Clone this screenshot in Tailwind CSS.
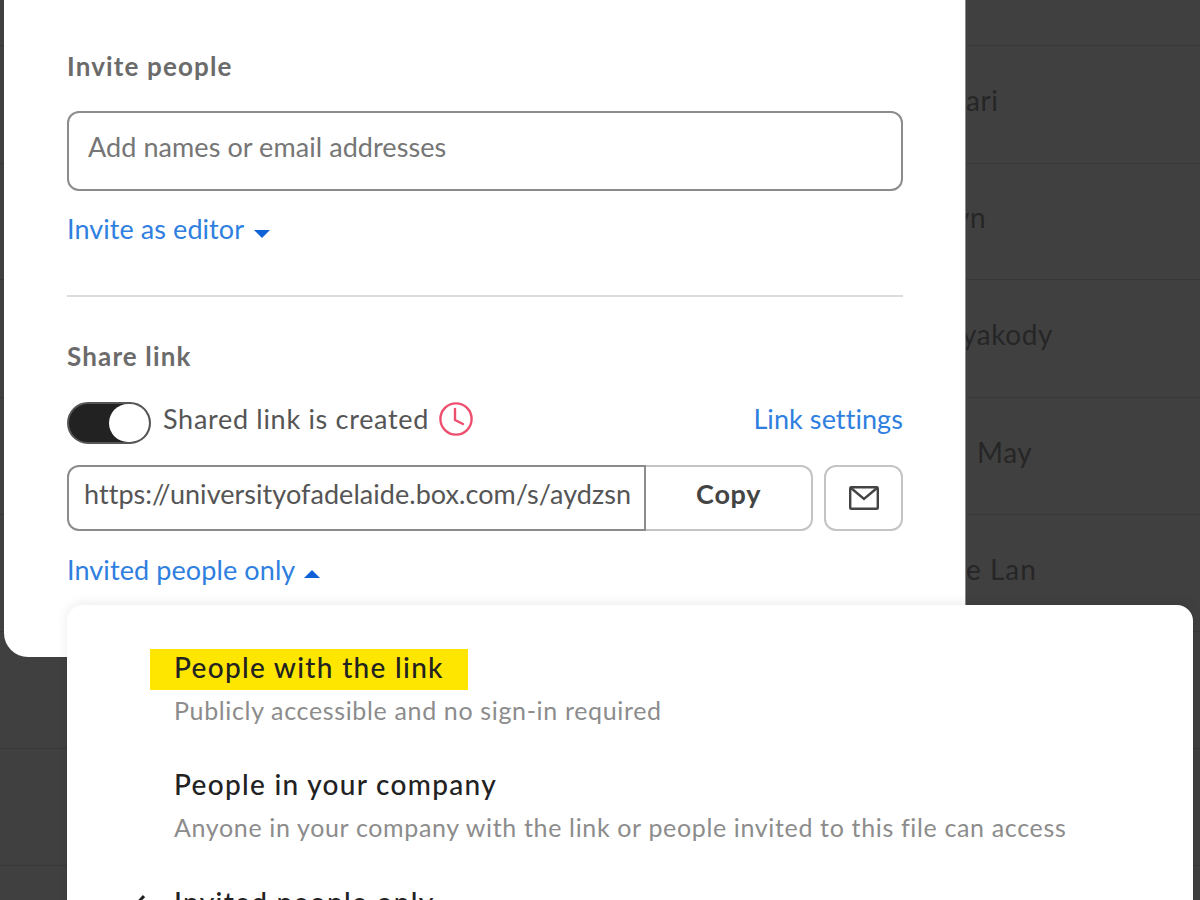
<!DOCTYPE html>
<html><head><meta charset="utf-8"><script src="https://cdn.jsdelivr.net/npm/@tailwindcss/browser@4"></script></head>
<body class="m-0">
<div class="relative w-[1200px] h-[900px] overflow-hidden bg-[#404040] font-['Lato',sans-serif]">
  <!-- dimmed table behind the modal -->
  <div class="flex flex-col -mt-[71px] text-[28px] leading-none tracking-[0.6px] text-[#262626]">
    <div class="h-[117px] border-b border-[#383838]"></div>
    <div class="h-[118px] border-b border-[#383838] flex items-center pl-[966px] pb-[9px]"><span>ari</span></div>
    <div class="h-[116px] border-b border-[#383838] flex items-center pl-[955px] pb-[9px]"><span>yn</span></div>
    <div class="h-[118px] border-b border-[#383838] flex items-center pl-[962px] pb-[9px]"><span>yakody</span></div>
    <div class="h-[117px] border-b border-[#383838] flex items-center pl-[977px] pb-[9px]"><span>May</span></div>
    <div class="h-[117px] border-b border-[#383838] flex items-center pl-[966px] pb-[9px]"><span class="tracking-[1px]">e Lan</span></div>
    <div class="h-[117px] border-b border-[#383838]"></div>
    <div class="h-[117px] border-b border-[#383838]"></div>
  </div>

  <!-- modal -->
  <div class="absolute left-[4px] top-0 w-[962px] h-[657px] bg-white rounded-bl-[24px] pl-[63px] pr-[62px] border-r border-[#8a8a8a] text-[#444]">
    <div class="pt-[49px] text-[26px] leading-[34px] font-bold tracking-[1.15px] text-[#6b6b6b]">Invite people</div>
    <div class="mt-[28px] h-[80px] border-2 border-[#8c8c8c] rounded-[12px] pl-[19px] pb-[8px] flex items-center text-[27px] tracking-[0.07px] text-[#767676]">Add names or email addresses</div>
    <div class="mt-[22px] h-[34px] pb-[2px] flex items-center gap-[10px] text-[27px] tracking-[0.07px] text-[#2f7fe0]">
      <span>Invite as editor</span>
      <svg width="16" height="8" viewBox="0 0 16 8" class="mt-[9px]"><path d="M0 0h16L8 8z" fill="#0f62d6"/></svg>
    </div>
    <div class="mt-[48px] border-t-2 border-[#dcdcdc]"></div>
    <div class="mt-[42px] text-[26px] leading-[34px] font-bold tracking-[1.15px] text-[#6b6b6b]">Share link</div>
    <div class="mt-[29px] h-[42px] flex items-center text-[27px]">
      <div class="w-[84px] h-[42px] rounded-full bg-[#222] border-2 border-[#555] flex justify-end items-center">
        <div class="w-[40px] h-[38px] rounded-full bg-white"></div>
      </div>
      <span class="ml-[12px] mb-[8px] tracking-[0.7px] text-[#555]">Shared link is created</span>
      <svg width="36" height="36" viewBox="0 0 36 36" class="ml-[9px] mb-[8px]" fill="none" stroke="#ee4f6f" stroke-width="2.4" stroke-linecap="round" stroke-linejoin="round"><circle cx="18" cy="18" r="15.6"/><path d="M17 8v11l8 4"/></svg>
      <span class="ml-auto mb-[8px] tracking-[0.08px] text-[#2f7fe0]">Link settings</span>
    </div>
    <div class="mt-[21px] h-[66px] flex">
      <div class="w-[579px] h-full border-2 border-[#8c8c8c] rounded-l-[12px] pl-[15px] pr-[12px] pb-[8px] flex items-center overflow-hidden whitespace-nowrap text-[27px] tracking-[0.05px] text-[#555] shrink-0">https://universityofadelaide.box.com/s/aydzsn</div>
      <div class="w-[168px] h-full border-2 border-l-0 border-[#c4c4c4] rounded-r-[12px] pb-[8px] flex items-center justify-center text-[27px] font-bold tracking-[0.7px] text-[#444]">Copy</div>
      <div class="ml-[11px] w-[79px] h-full border-2 border-[#c4c4c4] rounded-[12px] flex items-center justify-center">
        <svg width="30" height="24" viewBox="0 0 30 24" fill="none" stroke="#444" stroke-width="2.4"><rect x="1.2" y="1.2" width="27.6" height="21.6" rx="1"/><path d="M2 2l13 11L28 2"/></svg>
      </div>
    </div>
    <div class="mt-[22px] h-[34px] flex items-center gap-[9px] text-[27px] tracking-[0.1px] text-[#2f7fe0]">
      <span>Invited people only</span>
      <svg width="16" height="8" viewBox="0 0 16 8" class="mt-[7px]"><path d="M0 8h16L8 0z" fill="#0f62d6"/></svg>
    </div>
  </div>

  <!-- dropdown -->
  <div class="absolute left-[67px] top-[605px] w-[1126px] h-[340px] bg-white rounded-[16px] shadow-[0_-2px_12px_rgba(0,0,0,0.08)] pt-[44px]">
    <div class="ml-[83px] w-[318px] h-[41px] bg-[#ffe600] pl-[24px] pb-[6px] flex items-center text-[28px] font-medium tracking-[1.3px] text-[#222]">People with the link</div>
    <div class="ml-[107px] mt-[5px] h-[34px] pb-[2px] flex items-center text-[25px] tracking-[0.65px] text-[#8c8c8c]">Publicly accessible and no sign-in required</div>
    <div class="ml-[107px] mt-[38px] h-[41px] pb-[8px] flex items-center text-[28px] font-medium tracking-[1.3px] text-[#222]">People in your company</div>
    <div class="ml-[107px] mt-[5px] h-[34px] pb-[4px] flex items-center text-[25px] tracking-[0.65px] text-[#8c8c8c]">Anyone in your company with the link or people invited to this file can access</div>
    <div class="mt-[38px] h-[41px] pb-[8px] flex items-center text-[28px] font-medium tracking-[1.3px] text-[#222]">
      <svg width="18" height="16" viewBox="0 0 18 16" class="ml-[60px] mr-[29px] mt-[0px]" fill="none" stroke="#222" stroke-width="3"><path d="M1 9l5 5L17 2"/></svg>
      <span>Invited people only</span>
    </div>
  </div>
</div>
</body></html>
